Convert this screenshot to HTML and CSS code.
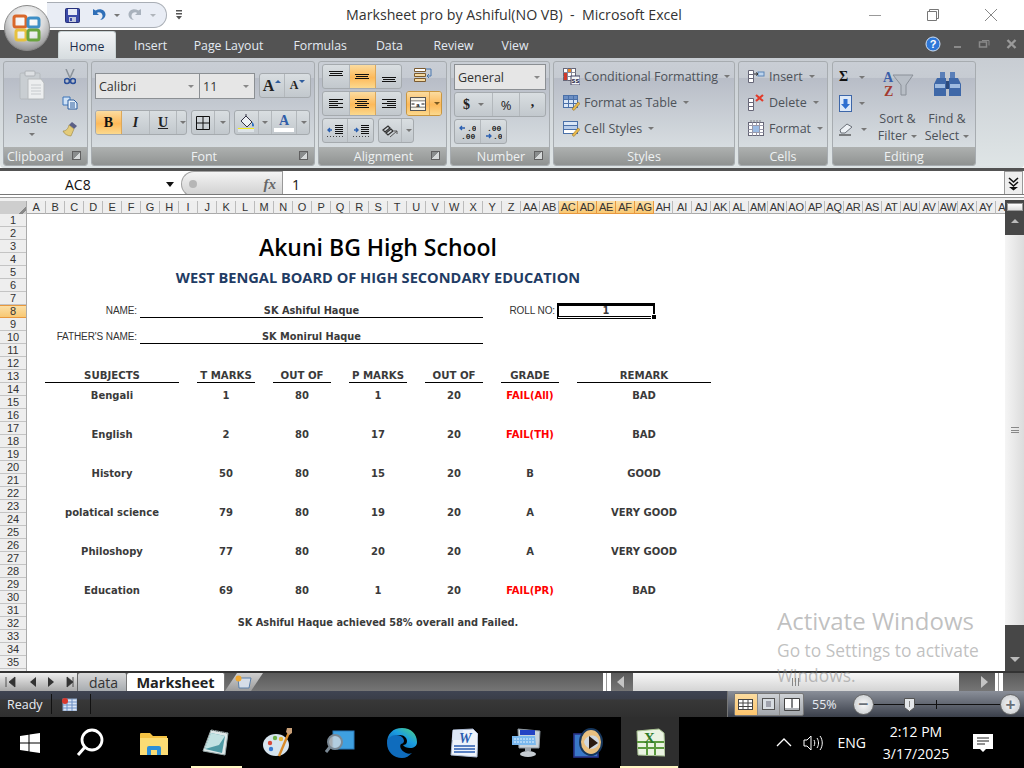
FILE: index.html
```html
<!DOCTYPE html>
<html lang="en">
<head>
    <meta charset="UTF-8">
    <title>Marksheet pro by Ashiful(NO VB) - Microsoft Excel</title>
    <link rel="stylesheet" href="styles.css">
</head>
<body>
    <!-- office orb sits over the title bar and tabs -->
    <div class="orb">
        <svg width="46" height="46" viewBox="0 0 46 46">
            <defs>
                <radialGradient id="orbFill" cx="50%" cy="30%" r="70%"><stop offset="0" stop-color="#ffffff"/><stop offset="0.55" stop-color="#d9dadb"/><stop offset="1" stop-color="#8f8f8f"/></radialGradient>
            </defs>
            <circle cx="23" cy="23" r="22.5" fill="url(#orbFill)" stroke="#8a8a8a"/>
            <rect x="10" y="11" width="12" height="11" rx="2" fill="#fff" fill-opacity=".5" stroke="#d9682b" stroke-width="3"/>
            <rect x="24" y="13" width="11" height="9" rx="2" fill="#fff" fill-opacity=".5" stroke="#3f8fc6" stroke-width="3"/>
            <rect x="12" y="25" width="10" height="10" rx="2" fill="#fff" fill-opacity=".6" stroke="#e7c13e" stroke-width="3"/>
            <rect x="24" y="25" width="11" height="10" rx="2" fill="#fff" fill-opacity=".5" stroke="#6aa43e" stroke-width="3"/>
        </svg>
    </div>

    <div class="titlebar">
        <div class="qat">
            <svg class="qat-save" width="15" height="15" viewBox="0 0 15 15"><rect x=".5" y=".5" width="14" height="14" rx="1" fill="#3b4aa8" stroke="#27307a"/><rect x="3" y="1" width="9" height="6" fill="#e6eaf6"/><rect x="4" y="9" width="7" height="5" fill="#c3c9de"/><rect x="5" y="10" width="2" height="3" fill="#3b4aa8"/></svg>
            <svg class="qat-undo" width="14" height="14" viewBox="0 0 14 14"><path d="M1 1v6h6L4.800 4.900C7 3.600 10 4.600 10.500 7.500c.3 2-1 3.600-2.500 4.500 3-.3 5.500-2.500 5.500-5.500C13.500 2 8-.5 3.600 2.600z" fill="#2f6fb8"/></svg>
            <span class="caret qat-caret"></span>
            <svg class="qat-redo" width="14" height="14" viewBox="0 0 14 14"><path d="M13 1v6H7l2.200-2.100C7 3.600 4 4.600 3.500 7.500c-.3 2 1 3.600 2.500 4.500-3-.3-5.500-2.500-5.500-5.500C.5 2 6-.5 10.400 2.600z" fill="#a9b2bd"/></svg>
            <span class="caret qat-caret light"></span>
        </div>
        <svg class="qat-custom" width="8" height="10" viewBox="0 0 8 10"><rect x="1" y="0" width="6" height="1.500" fill="#555"/><rect x="1" y="3" width="6" height="1.500" fill="#555"/><path d="M1 6h6L4 9.500z" fill="#555"/></svg>
        <div class="win-title">Marksheet pro by Ashiful(NO VB) &nbsp;-&nbsp; Microsoft Excel</div>
        <div class="win-buttons">
            <svg width="14" height="14" viewBox="0 0 14 14"><path d="M1 7.500h12" stroke="#999" fill="none"/></svg>
            <svg width="14" height="14" viewBox="0 0 14 14"><path d="M1.500 3.500h9v9h-9zM3.500 3.500v-2h9v9h-2" stroke="#777" fill="none"/></svg>
            <svg width="14" height="14" viewBox="0 0 14 14"><path d="M1 1l12 12M13 1L1 13" stroke="#888" fill="none"/></svg>
        </div>
    </div>

    <div class="tabbar">
        <span class="tab active">Home</span>
        <span class="tab t-insert">Insert</span>
        <span class="tab t-page">Page Layout</span>
        <span class="tab t-formulas">Formulas</span>
        <span class="tab t-data">Data</span>
        <span class="tab t-review">Review</span>
        <span class="tab t-view">View</span>
        <div class="tab-right">
            <svg width="16" height="16" viewBox="0 0 16 16"><circle cx="8" cy="8" r="7" fill="#2f78d8" stroke="#cfe0f5"/><text x="8" y="12" text-anchor="middle" font-size="11" font-weight="700" font-family="Liberation Sans" fill="#fff">?</text></svg>
            <svg class="tr-min" width="10" height="10" viewBox="0 0 10 10"><rect x="1" y="7" width="7" height="2" fill="#8a8a8a"/></svg>
            <svg class="tr-rest" width="12" height="10" viewBox="0 0 12 10"><rect x="1.500" y="3" width="7" height="5" fill="none" stroke="#8a8a8a" stroke-width="1.500"/><path d="M4 1.500h7v5" fill="none" stroke="#8a8a8a"/></svg>
            <svg class="tr-close" width="11" height="10" viewBox="0 0 11 10"><path d="M1.500 1l8 8M9.500 1l-8 8" stroke="#9a9a9a" stroke-width="2.400" fill="none"/></svg>
        </div>
    </div>

    <div class="ribbon">
        <section class="group g-clip">
            <div class="group-body clip-body">
                <div class="paste">
                    <svg width="26" height="30" viewBox="0 0 26 30"><rect x="1" y="3" width="20" height="26" rx="1.500" fill="#c9ced2" stroke="#b4b9bd"/><rect x="6" y="1" width="10" height="5" rx="1" fill="#dde0e3" stroke="#aeb2b6"/><path d="M9 9h13l3 4v16H9z" fill="#eceeef" stroke="#b6babd"/><path d="M12 15h10M12 18h10M12 21h10M12 24h10" stroke="#c6cacd"/></svg>
                    <span class="paste-label">Paste</span>
                    <span class="caret"></span>
                </div>
                <div class="clip-tools">
                    <svg width="12" height="16" viewBox="0 0 12 16"><path d="M2 0l4 9M10 0L6 9" stroke="#8b929a" stroke-width="1.500" fill="none"/><circle cx="3" cy="12" r="2.500" fill="none" stroke="#2a4f9a" stroke-width="1.600"/><circle cx="9" cy="12" r="2.500" fill="none" stroke="#2a4f9a" stroke-width="1.600"/></svg>
                    <svg width="16" height="14" viewBox="0 0 16 14"><path d="M1 1h7v8H1z" fill="#cfe2f6" stroke="#3a73b8"/><path d="M6 4h6l3 3v6H6z" fill="#e6f0fa" stroke="#2b5d9e"/><path d="M8 7h5M8 9h5M8 11h5" stroke="#2b5d9e"/></svg>
                    <svg width="16" height="16" viewBox="0 0 16 16"><path d="M10 1l5 4-3 3-5-4z" fill="#5a5f86"/><path d="M7 4l5 4-3 7C6 15 2 13 1 10c3 0 5-2 6-6z" fill="#e3cb7a" stroke="#9a8442" stroke-width=".6"/></svg>
                </div>
            </div>
            <div class="group-label left">Clipboard<span class="launcher"></span></div>
        </section>

        <section class="group g-font">
            <div class="group-body font-body">
                <div class="row">
                    <div class="combo c-fontname"><span>Calibri</span><span class="caret"></span></div>
                    <div class="combo c-fontsize"><span>11</span><span class="caret"></span></div>
                    <div class="btn-set grow">
                        <span class="btn"><b class="big-a">A</b><i class="mini-up"></i></span>
                        <span class="btn"><b class="small-a">A</b><i class="mini-down"></i></span>
                    </div>
                </div>
                <div class="row row-b">
                    <div class="btn-set set-biu">
                        <span class="btn on fmt fmt-b">B</span>
                        <span class="btn fmt fmt-i">I</span>
                        <span class="btn fmt fmt-u">U</span>
                        <span class="btn btn-drop"><span class="caret"></span></span>
                    </div>
                    <div class="btn-set set-border">
                        <span class="btn btn-border"><svg width="14" height="14" viewBox="0 0 14 14"><path d="M.5.500h13v13H.5zM7 .5v13M.5 7h13" fill="none" stroke="#111"/></svg></span>
                        <span class="btn btn-drop"><span class="caret"></span></span>
                    </div>
                    <div class="btn-set set-color">
                        <span class="btn btn-fill"><svg width="18" height="18" viewBox="0 0 18 18"><path d="M3 7l5-5 6 6-5 5z" fill="#eef1f5" stroke="#334"/><path d="M8 2V0" stroke="#334"/><path d="M14 8c1.500 1 2 2.500 2 3.500a1 1 0 01-2 0z" fill="#2a6fc0"/><rect x="0" y="14" width="16" height="1" fill="#f3ec1c"/><rect x="0" y="15" width="16" height="3" fill="#dde3e8"/></svg></span>
                        <span class="btn btn-drop"><span class="caret"></span></span>
                        <span class="btn btn-color"><b class="color-a">A</b><i class="color-bar"></i></span>
                        <span class="btn btn-drop"><span class="caret"></span></span>
                    </div>
                </div>
            </div>
            <div class="group-label">Font<span class="launcher"></span></div>
        </section>

        <section class="group g-align">
            <div class="group-body align-body">
                <div class="row">
                    <div class="btn-set set-three">
                        <span class="btn"><svg width="14" height="12" viewBox="0 0 14 12"><path d="M0 .5h14M1 2.500h12M0 4.500h14" stroke="#111"/></svg></span>
                        <span class="btn on"><svg width="14" height="12" viewBox="0 0 14 12"><path d="M0 3.500h14M1 5.500h12M0 7.500h14" stroke="#111"/></svg></span>
                        <span class="btn"><svg width="14" height="12" viewBox="0 0 14 12"><path d="M0 6.500h14M1 8.500h12M0 10.500h14" stroke="#111"/></svg></span>
                    </div>
                    <svg class="wrap-icon" width="18" height="16" viewBox="0 0 18 16"><path d="M.5 1.500h11v3H.5z" fill="#fff" stroke="#7a5a30"/><path d="M.5 6.500h11v3H.5zM.5 11.500h11v3H.5z" fill="#f5d9a0" stroke="#7a5a30"/><path d="M12 2h5M17 2v7h-4M13 9l2-2M13 9l2 2" stroke="#4a78b0" fill="none"/></svg>
                </div>
                <div class="row">
                    <div class="btn-set set-three">
                        <span class="btn"><svg width="14" height="12" viewBox="0 0 14 12"><path d="M0 1.500h14M0 3.500h9M0 5.500h14M0 7.500h9M0 9.500h14" stroke="#111"/></svg></span>
                        <span class="btn on"><svg width="14" height="12" viewBox="0 0 14 12"><path d="M0 1.500h14M2 3.500h10M0 5.500h14M2 7.500h10M0 9.500h14" stroke="#111"/></svg></span>
                        <span class="btn"><svg width="14" height="12" viewBox="0 0 14 12"><path d="M0 1.500h14M5 3.500h9M0 5.500h14M5 7.500h9M0 9.500h14" stroke="#111"/></svg></span>
                    </div>
                    <div class="btn-set set-merge">
                        <span class="btn on btn-merge"><svg width="16" height="14" viewBox="0 0 16 14"><rect x=".5" y=".5" width="15" height="13" fill="#f7f2e4" stroke="#555"/><path d="M.5 4h15M.5 10h15" stroke="#555"/><rect x="1" y="4.500" width="14" height="5" fill="#fff"/><text x="8" y="9.500" text-anchor="middle" font-size="6" font-weight="700" font-family="Liberation Sans" fill="#111">a</text><path d="M1.500 7h3M11.500 7h3" stroke="#111"/></svg></span>
                        <span class="btn on btn-drop"><span class="caret dark"></span></span>
                    </div>
                </div>
                <div class="row">
                    <div class="btn-set set-indent">
                        <span class="btn"><svg width="16" height="13" viewBox="0 0 16 13"><path d="M8 1.500h8M8 3.500h8M8 5.500h8M8 7.500h8M8 9.500h8" stroke="#111"/><path d="M5 6H1m2-2L1 6l2 2" stroke="#2a5fb0" fill="none" stroke-width="1.400"/><path d="M0 12.500h16" stroke="#444" stroke-dasharray="1 2"/></svg></span>
                        <span class="btn"><svg width="16" height="13" viewBox="0 0 16 13"><path d="M8 1.500h8M8 3.500h8M8 5.500h8M8 7.500h8M8 9.500h8" stroke="#111"/><path d="M1 6h4M3 4l2 2-2 2" stroke="#2a5fb0" fill="none" stroke-width="1.400"/><path d="M0 12.500h16" stroke="#444" stroke-dasharray="1 2"/></svg></span>
                    </div>
                    <div class="btn-set set-orient">
                        <span class="btn btn-orient"><svg width="16" height="14" viewBox="0 0 16 14"><path d="M1 6l5-4 2 2-5 4zM4 9l5-4 2 2-5 4z" fill="none" stroke="#333" stroke-width="1.300"/><path d="M8 13l7-6M12 7h3v3" stroke="#555" fill="none"/></svg></span>
                        <span class="btn btn-drop"><span class="caret"></span></span>
                    </div>
                </div>
            </div>
            <div class="group-label">Alignment<span class="launcher"></span></div>
        </section>

        <section class="group g-number">
            <div class="group-body number-body">
                <div class="combo c-general"><span>General</span><span class="caret"></span></div>
                <div class="btn-set set-num">
                    <span class="btn btn-dollar"><b>$</b><span class="caret"></span></span>
                    <span class="btn btn-pct">%</span>
                    <span class="btn btn-comma"><b>,</b></span>
                </div>
                <div class="btn-set set-dec">
                    <span class="btn btn-dec"><svg width="17" height="16" viewBox="0 0 17 16"><path d="M1 4h5M3 2L1 4l2 2" stroke="#2a5fb0" fill="none" stroke-width="1.300"/><text x="8" y="7" font-size="8" font-weight="700" font-family="Liberation Mono" fill="#222">.0</text><text x="2" y="15" font-size="8" font-weight="700" font-family="Liberation Mono" fill="#222">.00</text></svg></span>
                    <span class="btn btn-dec"><svg width="17" height="16" viewBox="0 0 17 16"><text x="2" y="7" font-size="8" font-weight="700" font-family="Liberation Mono" fill="#222">.00</text><path d="M1 12h5M4 10l2 2-2 2" stroke="#2a5fb0" fill="none" stroke-width="1.300"/><text x="8" y="15" font-size="8" font-weight="700" font-family="Liberation Mono" fill="#222">.0</text></svg></span>
                </div>
            </div>
            <div class="group-label">Number<span class="launcher"></span></div>
        </section>

        <section class="group g-styles">
            <div class="group-body list-body">
                <div class="list-item"><svg width="17" height="17" viewBox="0 0 17 17"><rect x=".5" y=".5" width="12" height="12" fill="#fff" stroke="#667"/><path d="M.5 4.500h12M.5 8.500h12M4.500.5v12M8.500.5v12" stroke="#889"/><rect x="1" y="5" width="3" height="7" fill="#d23a2a"/><rect x="5" y="1" width="3" height="3" fill="#e8842a"/><rect x="8" y="8" width="9" height="9" fill="#f4f6f8" stroke="#446"/><text x="12.500" y="15" text-anchor="middle" font-size="7" font-weight="700" font-family="Liberation Sans" fill="#224">ss</text></svg><span>Conditional Formatting</span><span class="caret"></span></div>
                <div class="list-item"><svg width="17" height="17" viewBox="0 0 17 17"><rect x=".5" y="1.500" width="14" height="12" fill="#dbe7f6" stroke="#4a70a8"/><rect x="1" y="2" width="13" height="3" fill="#6c8fc4"/><path d="M.5 5.500h14M.5 9.500h14M5.500 1.500v12M10.500 1.500v12" stroke="#4a70a8"/><path d="M9 15l6-7 2 1.500-6 7z" fill="#e8b84a" stroke="#8a6a20" stroke-width=".5"/></svg><span>Format as Table</span><span class="caret"></span></div>
                <div class="list-item"><svg width="17" height="17" viewBox="0 0 17 17"><rect x=".5" y="1.500" width="14" height="4" fill="#dbe7f6" stroke="#4a70a8"/><rect x=".5" y="5.500" width="14" height="4" fill="#b8cdea" stroke="#4a70a8"/><rect x=".5" y="9.500" width="14" height="4" fill="#fff" stroke="#4a70a8"/><path d="M9 15l6-7 2 1.500-6 7z" fill="#e8b84a" stroke="#8a6a20" stroke-width=".5"/></svg><span>Cell Styles</span><span class="caret"></span></div>
            </div>
            <div class="group-label center">Styles</div>
        </section>

        <section class="group g-cells">
            <div class="group-body list-body">
                <div class="list-item"><svg width="17" height="17" viewBox="0 0 17 17"><path d="M.5 2.500h5v4h-5zM.5 6.500h5v4h-5zM.5 10.500h5v4h-5z" fill="#fff" stroke="#667"/><rect x="10" y="4" width="6" height="4" fill="#bcd4ee" stroke="#5c86b8"/><path d="M6 6h4M8 4.500L10 6 8 7.500" stroke="#333" fill="none"/></svg><span>Insert</span><span class="caret"></span></div>
                <div class="list-item"><svg width="17" height="17" viewBox="0 0 17 17"><path d="M.5 4.500h5v4h-5zM.5 8.500h5v4h-5zM.5 12.500h5v4h-5z" fill="#fff" stroke="#667"/><path d="M8 1l7 6M15 1L8 7" stroke="#e23b2a" stroke-width="2.200"/></svg><span>Delete</span><span class="caret"></span></div>
                <div class="list-item"><svg width="17" height="17" viewBox="0 0 17 17"><rect x=".5" y="2.500" width="15" height="13" fill="#fff" stroke="#667"/><path d="M.5 5.500h15M.5 9.500h15M.5 12.500h15M4.500 2.500v13M8.500 2.500v13M11.500 2.500v13" stroke="#99a"/><rect x="5" y="6" width="6" height="6" fill="#9cbce4"/><path d="M3 .5v2M6 .5v2M9 .5v2M12 .5v2" stroke="#444" stroke-dasharray="1 1"/></svg><span>Format</span><span class="caret"></span></div>
            </div>
            <div class="group-label center">Cells</div>
        </section>

        <section class="group g-edit">
            <div class="group-body edit-body">
                <div class="edit-small">
                    <div class="edit-tool"><b class="sigma">Σ</b><span class="caret"></span></div>
                    <div class="edit-tool"><svg width="13" height="17" viewBox="0 0 13 17"><rect x=".5" y=".5" width="12" height="16" fill="#dce8f8" stroke="#3d66a8"/><path d="M4.500 4h4v5H11l-4.500 5L2 9h2.500z" fill="#2e6fd0"/></svg><span class="caret"></span></div>
                    <div class="edit-tool"><svg width="15" height="14" viewBox="0 0 15 14"><path d="M1 8l7-6 5 3-7 6H2z" fill="#eef2f6" stroke="#6a7078"/><path d="M0 13h12" stroke="#222"/></svg><span class="caret"></span></div>
                </div>
                <div class="edit-big e-sort">
                    <svg width="32" height="32" viewBox="0 0 32 32"><text x="1" y="14" font-size="14" font-weight="700" font-family="Liberation Serif" fill="#3b5fa8">A</text><text x="2" y="28" font-size="14" font-weight="700" font-family="Liberation Serif" fill="#a33a30">Z</text><path d="M11 7h20l-7 10v10h-5V17z" fill="#b8bec6" stroke="#8a9098"/></svg>
                    <span>Sort &amp;</span>
                    <span>Filter<i class="caret"></i></span>
                </div>
                <div class="edit-big e-find">
                    <svg width="30" height="28" viewBox="0 0 30 28"><path d="M8 2h5v6H8zM18 2h5v6h-5z" fill="#5a7fb8"/><path d="M5 8h9v18H2V14zM17 8h9l3 6v12H17z" fill="#3f68a8"/><path d="M3 14h10v4H3zM18 14h10v4H18z" fill="#9fbbe0"/><rect x="14" y="11" width="3" height="8" fill="#2c4a7c"/></svg>
                    <span>Find &amp;</span>
                    <span>Select<i class="caret"></i></span>
                </div>
            </div>
            <div class="group-label center">Editing</div>
        </section>
    </div>

    <div class="formula-bar">
        <div class="name-box"><span>AC8</span><i class="name-caret"></i></div>
        <div class="fx-pill"><i class="fx-dot"></i><span>fx</span></div>
        <div class="formula-input">1</div>
        <div class="formula-expand"><svg width="11" height="14" viewBox="0 0 11 14"><path d="M1 1l4.500 4L10 1M1 5l4.500 4L10 5" fill="none" stroke="#111" stroke-width="1.600"/><path d="M1 10h9l-4.500 3.500z" fill="#111"/></svg></div>
    </div>
    <div class="bar-gap"></div>

    <div class="col-heads">
        <div class="corner"></div>
        <span>A</span><span>B</span><span>C</span><span>D</span><span>E</span><span>F</span><span>G</span><span>H</span><span>I</span><span>J</span><span>K</span><span>L</span><span>M</span><span>N</span><span>O</span><span>P</span><span>Q</span><span>R</span><span>S</span><span>T</span><span>U</span><span>V</span><span>W</span><span>X</span><span>Y</span><span>Z</span>
        <span>AA</span><span>AB</span><span class="sel">AC</span><span class="sel">AD</span><span class="sel">AE</span><span class="sel">AF</span><span class="sel">AG</span><span>AH</span><span>AI</span><span>AJ</span><span>AK</span><span>AL</span><span>AM</span><span>AN</span><span>AO</span><span>AP</span><span>AQ</span><span>AR</span><span>AS</span><span>AT</span><span>AU</span><span>AV</span><span>AW</span><span>AX</span><span>AY</span><span>AZ</span>
    </div>

    <div class="work">
        <div class="row-heads">
            <span>1</span><span>2</span><span>3</span><span>4</span><span>5</span><span>6</span><span>7</span><span class="sel">8</span><span>9</span><span>10</span>
            <span>11</span><span>12</span><span>13</span><span>14</span><span>15</span><span>16</span><span>17</span><span>18</span><span>19</span><span>20</span>
            <span>21</span><span>22</span><span>23</span><span>24</span><span>25</span><span>26</span><span>27</span><span>28</span><span>29</span><span>30</span>
            <span>31</span><span>32</span><span>33</span><span>34</span><span>35</span>
        </div>
        <div class="sheet">
            <div class="school">Akuni BG High School</div>
            <div class="board">WEST BENGAL BOARD OF HIGH SECONDARY EDUCATION</div>
            <div class="info-row">
                <span class="info-label">NAME:</span>
                <span class="info-value">SK Ashiful Haque</span>
                <span class="roll-label">ROLL NO:</span>
                <span class="roll-cell">1<i class="handle"></i></span>
            </div>
            <div class="info-row">
                <span class="info-label">FATHER'S NAME:</span>
                <span class="info-value">SK Monirul Haque</span>
            </div>
            <div class="marks-head marks-grid">
                <span>SUBJECTS</span><span>T MARKS</span><span>OUT OF</span><span>P MARKS</span><span>OUT OF</span><span>GRADE</span><span>REMARK</span>
            </div>
            <div class="marks-row marks-grid"><span>Bengali</span><span>1</span><span>80</span><span>1</span><span>20</span><span class="fail">FAIL(All)</span><span>BAD</span></div>
            <div class="marks-row marks-grid"><span>English</span><span>2</span><span>80</span><span>17</span><span>20</span><span class="fail">FAIL(TH)</span><span>BAD</span></div>
            <div class="marks-row marks-grid"><span>History</span><span>50</span><span>80</span><span>15</span><span>20</span><span>B</span><span>GOOD</span></div>
            <div class="marks-row marks-grid"><span>polatical science</span><span>79</span><span>80</span><span>19</span><span>20</span><span>A</span><span>VERY GOOD</span></div>
            <div class="marks-row marks-grid"><span>Philoshopy</span><span>77</span><span>80</span><span>20</span><span>20</span><span>A</span><span>VERY GOOD</span></div>
            <div class="marks-row marks-grid"><span>Education</span><span>69</span><span>80</span><span>1</span><span>20</span><span class="fail">FAIL(PR)</span><span>BAD</span></div>
            <div class="summary">SK Ashiful Haque achieved 58% overall and Failed.</div>
        </div>
        <div class="vscroll">
            <i class="split-v"></i>
            <i class="arrow-up"></i>
            <div class="vthumb"><i class="grip-h"></i></div>
            <i class="arrow-down"></i>
        </div>
    </div>

    <div class="sheet-tabs">
        <div class="tab-nav">
            <svg width="70" height="12" viewBox="0 0 70 12"><path d="M2 1v10M11 1L5 6l6 5z" fill="#333" stroke="#333" stroke-width=".8"/><path d="M32 1l-6 5 6 5z" fill="#333"/><path d="M44 1l6 5-6 5z" fill="#333"/><path d="M63 1l6 5-6 5zM69 1v10" fill="#333" stroke="#333" stroke-width=".8"/></svg>
        </div>
        <span class="sheet-tab">data</span>
        <span class="sheet-tab current">Marksheet</span>
        <span class="new-tab"><svg width="18" height="14" viewBox="0 0 18 14"><path d="M3 3h13l-2 10H4z" fill="#d5dde8" stroke="#5a7fa8"/><circle cx="3.500" cy="3.500" r="3" fill="#f0a830"/></svg></span>
        <div class="hscroll">
            <i class="split-h"></i>
            <i class="arrow-left"></i>
            <div class="hthumb"><i class="grip-v"></i></div>
            <i class="arrow-right"></i>
            <i class="split-h"></i>
        </div>
    </div>

    <div class="statusbar">
        <span class="ready">Ready</span>
        <i class="status-sep"></i>
        <svg class="macro" width="15" height="13" viewBox="0 0 15 13"><rect x="1" y="1" width="14" height="12" fill="#dbe6f6" stroke="#8aa4c8"/><path d="M1 4h14M1 7h14M1 10h14M5 1v12M10 1v12" stroke="#6c8fc4"/><circle cx="3" cy="3" r="3" fill="#d8362a"/></svg>
        <i class="status-sep"></i>
        <div class="status-right">
            <div class="views">
                <span class="view on"><svg width="15" height="11" viewBox="0 0 15 11"><rect x=".5" y=".5" width="14" height="10" fill="#fff" stroke="#444"/><path d="M.5 4h14M.5 7.500h14M5 .5v10M10 .5v10" stroke="#444"/></svg></span>
                <span class="view"><svg width="13" height="12" viewBox="0 0 13 12"><rect x=".5" y=".5" width="12" height="11" fill="#d8dde2" stroke="#555"/><path d="M4 4h5M4 6h5M4 8h5" stroke="#667"/></svg></span>
                <span class="view"><svg width="16" height="13" viewBox="0 0 16 13"><path d="M1 1h6v9H1zM9 1h6v9H9z" fill="#fff"/><path d="M.5 .5h15v12H.5zM8 .5v9" fill="none" stroke="#444"/></svg></span>
            </div>
            <span class="zoom-pct">55%</span>
            <span class="zoom-btn">&minus;</span>
            <div class="zoom-track"><i class="zoom-tick"></i><svg class="zoom-thumb" width="11" height="14" viewBox="0 0 11 14"><path d="M.5.500h10v9l-5 4-5-4z" fill="#e4e7ea" stroke="#555"/><path d="M5.500 3v6" stroke="#888"/></svg></div>
            <span class="zoom-btn">+</span>
        </div>
    </div>

    <div class="taskbar">
        <span class="task task-start"><svg width="20" height="20" viewBox="0 0 20 20"><path d="M0 3l8.500-1.200v7.700H0zM9.500 1.600L20 0v9.500H9.500zM0 10.500h8.500v7.700L0 17zM9.500 10.500H20V20L9.500 18.400z" fill="#fff"/></svg></span>
        <span class="task task-start"><svg width="28" height="30" viewBox="0 0 28 30"><circle cx="16" cy="12" r="10" fill="none" stroke="#fff" stroke-width="2.800"/><path d="M9 19l-7 8" stroke="#fff" stroke-width="3"/></svg></span>
        <span class="task"><svg width="28" height="24" viewBox="0 0 28 24"><path d="M0 3a1 1 0 011-1h9l3 3h14v19H0z" fill="#f4c243"/><path d="M0 7h28v17H0z" fill="#fbdc74"/><path d="M7 24v-7a2 2 0 012-2h10a2 2 0 012 2v7h-4v-5h-6v5z" fill="#2c8fd8"/></svg></span>
        <span class="task task-note"><svg width="28" height="28" viewBox="0 0 28 28"><path d="M9 1l17 3-3 22L1 22z" fill="#dfe8e8" stroke="#9aa"/><path d="M9 4l14 3-3 17L3 20z" fill="#4f9aa4"/><path d="M9 4l14 3-6 9L3 20z" fill="#c2e2e2"/><path d="M10 1l15 3" stroke="#555" stroke-dasharray="1 1"/></svg></span>
        <span class="task"><svg width="30" height="30" viewBox="0 0 30 30"><ellipse cx="13" cy="17" rx="13" ry="11" fill="#d6e4ee"/><circle cx="7" cy="15" r="2.200" fill="#d8483a"/><circle cx="12" cy="10" r="2.200" fill="#6cb04a"/><circle cx="18" cy="11" r="2.200" fill="#e8b83a"/><circle cx="8" cy="21" r="2.200" fill="#3a7ad0"/><path d="M27 2l-11 26" stroke="#d88a2a" stroke-width="2.400"/><path d="M24 0h5v5l-3 2-3-3z" fill="#caa078"/></svg></span>
        <span class="task"><svg width="30" height="28" viewBox="0 0 30 28"><rect x="8" y="2" width="21" height="18" fill="#3fa0e0" stroke="#2a78b8"/><circle cx="10" cy="13" r="7" fill="#cfd8e0" fill-opacity=".8" stroke="#7a8894" stroke-width="2"/><path d="M5 18l-4 5" stroke="#7a8894" stroke-width="3"/></svg></span>
        <span class="task"><svg width="30" height="30" viewBox="0 0 30 30"><defs><linearGradient id="edgeFill" x1="0" y1="1" x2="1" y2="0"><stop offset="0" stop-color="#0c59a4"/><stop offset="0.55" stop-color="#1b9de2"/><stop offset="1" stop-color="#4fd67a"/></linearGradient></defs><path d="M15 0c9 0 15 6 15 14 0 4-3 6-7 6-3 0-6-1-7-3 2 0 4-1 4-4 0-3-3-6-7-6C7 7 2 11 0 15 0 6 6 0 15 0z" fill="url(#edgeFill)"/><path d="M0 15c0-5 5-8 9-8 5 0 8 3 8 6 0 2-2 3-3 3-2 2 0 7 5 9 2 1 4 1 6 0-3 3-6 5-10 5C7 30 0 24 0 15z" fill="#0f6cbd"/></svg></span>
        <span class="task"><svg width="28" height="30" viewBox="0 0 28 30"><path d="M3 2l20-1 5 5-1 23-26-2z" fill="#eef3fb" stroke="#aab8d0"/><path d="M3 2l10 0-1 10H2z" fill="#dbe6f6"/><text x="9" y="15" font-size="14" font-weight="700" font-style="italic" font-family="Liberation Serif" fill="#2a5cb0">W</text><path d="M4 18h21M4 21h21M4 24h21" stroke="#2a5cb0" stroke-width="1.600"/></svg></span>
        <span class="task"><svg width="30" height="30" viewBox="0 0 30 30"><path d="M7 1l22 2-1 17H8z" fill="#c9d2da" stroke="#8a949e"/><rect x="9" y="2" width="15" height="5" fill="#2342c4"/><path d="M1 8h23l1 9H1z" fill="#7ab8ee"/><path d="M3 11h20M3 14h20" stroke="#e4f2ff" stroke-dasharray="2 1"/><path d="M14 20h6v3h-6z" fill="#9aa2aa"/><ellipse cx="17" cy="26" rx="8" ry="3" fill="#c6ccd2"/></svg></span>
        <span class="task"><svg width="30" height="30" viewBox="0 0 30 30"><rect x="1" y="6" width="24" height="23" fill="#3a78c8" stroke="#28348a" stroke-width="1.600"/><ellipse cx="18" cy="14" rx="11" ry="13" fill="#e8c080" stroke="#16365c" stroke-width="2"/><path d="M11 14c2-8 14-9 15 0-1 9-13 9-15 0z" fill="#cfd8e0"/><path d="M16 8l9 7-9 6z" fill="#2a1a10"/></svg></span>
        <span class="task task-excel"><svg width="30" height="30" viewBox="0 0 30 30"><path d="M2 3l22-2 5 4 1 23-27-1z" fill="#eaf3e2" stroke="#a6c090"/><path d="M2 14h27M3 20h26M12 14v13M20 14v13" stroke="#5b9a3e" stroke-width="2"/><text x="9" y="15" font-size="15" font-weight="700" font-family="Liberation Serif" fill="#2f7a28">X</text></svg></span>
        <div class="tray">
            <svg width="16" height="9" viewBox="0 0 16 9"><path d="M1 8l7-7 7 7" fill="none" stroke="#fff" stroke-width="1.300"/></svg>
            <svg class="tray-sound" width="22" height="16" viewBox="0 0 22 16"><path d="M1 5h3l4-4v14l-4-4H1z" fill="none" stroke="#fff"/><path d="M11 5c1 2 1 4 0 6M14 3c2 3 2 7 0 10M17 1c3 4 3 10 0 14" fill="none" stroke="#fff"/></svg>
            <span class="tray-lang">ENG</span>
            <div class="clock"><span>2:12 PM</span><span>3/17/2025</span></div>
            <svg class="tray-note" width="20" height="20" viewBox="0 0 20 20"><path d="M0 1h20v15h-7l-3 3-3-3H0z" fill="#fff"/><path d="M4 5h12M4 8h12M4 11h8" stroke="#222"/></svg>
        </div>
        <i class="task-mark mark-note"></i>
        <i class="task-mark mark-excel"></i>
    </div>

    <!-- watermark lies over the sheet and the scrollbar -->
    <div class="activate">
        <div class="activate-title">Activate Windows</div>
        <div class="activate-text">Go to Settings to activate<br>Windows.</div>
    </div>
</body>
</html>
```
FILE: styles.css
```css
* {
    box-sizing: border-box;
}
body {
    margin: 0;
    width: 1024px;
    height: 768px;
    overflow: hidden;
    position: relative;
    display: flex;
    flex-direction: column;
    background: #fff;
    font-family: "Open Sans", "Liberation Sans", sans-serif;
    font-size: 12px;
}
i {
    display: block;
}
.caret {
    display: inline-block;
    width: 0;
    height: 0;
    border: 3px solid transparent;
    border-top: 3px solid #777;
    border-bottom: 0;
}
.caret.light {
    border-top-color: #b0b5bb;
}
.caret.dark {
    border-top-color: #7a5a20;
}

/* title bar */
.orb {
    position: absolute;
    left: 4px;
    top: 5px;
    z-index: 5;
    width: 46px;
    height: 46px;
}
.titlebar {
    height: 30px;
    flex: none;
    display: flex;
    align-items: center;
    position: relative;
    background: #fff;
}
.qat {
    margin-left: 47px;
    width: 120px;
    height: 26px;
    padding-left: 18px;
    display: flex;
    align-items: center;
    background: #e9edf5;
    border: 1px solid #a9aeb5;
    border-left: 0;
    border-radius: 0 13px 13px 0;
}
.qat-undo {
    margin-left: 12px;
}
.qat-caret {
    margin-left: 8px;
}
.qat-redo {
    margin-left: 8px;
}
.qat-custom {
    margin-left: 8px;
}
.win-title {
    position: absolute;
    left: 346px;
    top: 5px;
    font-size: 14.2px;
    color: #333;
    white-space: nowrap;
}
.win-buttons {
    margin-left: auto;
    margin-right: 26px;
    display: flex;
    gap: 44px;
}

/* tabs */
.tabbar {
    height: 28px;
    flex: none;
    display: flex;
    align-items: center;
    background: #535353;
    position: relative;
}
.tab {
    margin-top: 3px;
    color: #e4eaf2;
    font-size: 12.3px;
    white-space: nowrap;
}
.tab.active {
    width: 58px;
    height: 28px;
    margin-left: 58px;
    margin-top: 1px;
    line-height: 29px;
    text-align: center;
    color: #1b2c4a;
    background: linear-gradient(#f3f5f7, #d6dcdf);
    border: 1px solid #c8d2d4;
    border-bottom: 0;
    border-radius: 3px 3px 0 0;
}
.t-insert { margin-left: 18px; }
.t-page { margin-left: 26.5px; }
.t-formulas { margin-left: 30px; }
.t-data { margin-left: 29px; }
.t-review { margin-left: 30.5px; }
.t-view { margin-left: 28px; }
.tab-right {
    margin-left: auto;
    margin-right: 7px;
    display: flex;
    align-items: center;
}
.tr-min { margin-left: 12px; }
.tr-rest { margin-left: 15px; }
.tr-close { margin-left: 16px; }

/* ribbon */
.ribbon {
    height: 110px;
    flex: none;
    padding: 3px 0 0 3px;
    display: flex;
    gap: 3px;
    background: linear-gradient(#c8cdd3, #dfe5e6);
    border-radius: 0 0 4px 4px;
}
.group {
    height: 105px;
    display: flex;
    flex-direction: column;
    border: 1px solid #a7acb0;
    border-radius: 3px;
    background: linear-gradient(#c9ced5 0, #c6cbd2 15%, #b8bdc7 16%, #dfe5e7 100%);
    overflow: hidden;
}
.g-clip { width: 85px; }
.g-font { width: 224px; }
.g-align { width: 129px; }
.g-number { width: 100px; }
.g-styles { width: 182px; }
.g-cells { width: 90px; }
.g-edit { width: 144px; margin-left: 1px; }
.group-body {
    height: 85px;
    flex: none;
    color: #4d5259;
}
.group-label {
    height: 19px;
    position: relative;
    padding-left: 2px;
    line-height: 19px;
    text-align: center;
    font-size: 12.5px;
    color: #eef1f2;
    background: linear-gradient(#aeb1b0, #8e9190);
}
.group-label.center {
    padding-left: 0;
}
.group-label.left {
    padding-left: 3px;
    text-align: left;
}
.launcher {
    position: absolute;
    right: 6px;
    top: 4px;
    width: 9px;
    height: 9px;
    border: 1px solid #606060;
    background: linear-gradient(135deg, #8a8d8d 50%, #d6d9d9 50%);
}

/* clipboard */
.clip-body {
    display: flex;
}
.paste {
    width: 55px;
    padding-top: 8px;
    display: flex;
    flex-direction: column;
    align-items: center;
}
.paste-label {
    margin-top: 10px;
    font-size: 12.5px;
}
.paste .caret {
    margin-top: 6px;
}
.clip-tools {
    width: 22px;
    padding-top: 7px;
    display: flex;
    flex-direction: column;
    align-items: center;
    gap: 11px;
}

/* buttons and combos */
.row {
    display: flex;
    gap: 4px;
}
.combo {
    height: 26px;
    display: flex;
    align-items: center;
    justify-content: space-between;
    padding: 0 5px 0 3px;
    background: #e6e6e6;
    border: 1px solid #8b8f93;
    color: #333;
    font-size: 12.5px;
}
.combo .caret {
    border-top-color: #888;
}
.c-fontname { width: 105px; }
.c-fontsize { width: 55px; margin-left: -4px; border-left: 0; }
.btn-set {
    display: flex;
    height: 25px;
    border: 1px solid #a5aaae;
    border-radius: 3px;
    background: linear-gradient(#d9dee1, #c2c8cd);
    overflow: hidden;
}
.btn {
    flex: none;
    height: 100%;
    display: flex;
    align-items: center;
    justify-content: center;
    position: relative;
    border-right: 1px solid #b3b8bc;
    color: #222;
}
.btn:last-child {
    border-right: 0;
}
.btn.on {
    background: linear-gradient(#fbdca0, #fdb95a 55%, #fbd98e);
    border-right-color: #dca85a;
}
.btn-drop {
    width: 16px;
}

/* font group */
.font-body {
    padding: 11px 0 0 3px;
}
.row-b {
    margin-top: 11px;
}
.grow {
    width: 52px;
    margin-left: 0;
}
.grow .btn {
    width: 50%;
}
.big-a {
    font: 700 16px "Liberation Serif", serif;
}
.small-a {
    font: 700 12px "Liberation Serif", serif;
}
.mini-up, .mini-down {
    width: 0;
    height: 0;
    margin: -9px 0 0 1px;
    border: 3px solid transparent;
}
.mini-up {
    border-top: 0;
    border-bottom: 3px solid #2f5d9e;
}
.mini-down {
    border-bottom: 0;
    border-top: 3px solid #2f5d9e;
}
.set-biu { width: 92px; }
.set-border { width: 39px; }
.set-color { width: 76px; }
.fmt {
    width: 26px;
    font: 700 14px "Liberation Serif", serif;
}
.fmt-b { color: #111; }
.fmt-i { font-style: italic; width: 28px; }
.fmt-u { text-decoration: underline; width: 27px; }
.set-biu .btn-drop { width: 11px; }
.set-border .btn-drop { width: 15px; }
.btn-border { width: 23px; }
.btn-fill { width: 24px; }
.set-color .btn-drop { width: 13px; }
.btn-color {
    width: 25px;
    flex-direction: column;
}
.color-a {
    font: 700 14px/14px "Liberation Serif", serif;
    color: #2f5da8;
}
.color-bar {
    width: 20px;
    height: 4px;
    background: #fff;
}

/* alignment group */
.align-body {
    padding: 2px 0 0 3px;
    display: flex;
    flex-direction: column;
    gap: 2px;
}
.set-three { width: 80px; }
.set-three .btn { width: 26.500px; }
.wrap-icon {
    margin: 3px 0 0 8px;
}
.set-merge {
    width: 36px;
    border-color: #c9963f;
}
.btn-merge { width: 23px; }
.set-merge .btn-drop { width: 13px; }
.set-indent { width: 52px; }
.set-indent .btn { width: 50%; }
.set-orient { width: 36px; }
.btn-orient { width: 23px; }
.set-orient .btn-drop { width: 13px; }

/* number group */
.number-body {
    padding: 2px 0 0 3px;
    display: flex;
    flex-direction: column;
    gap: 2px;
}
.c-general {
    width: 92px;
}
.set-num {
    width: 92px;
}
.btn-dollar {
    width: 38px;
    gap: 8px;
    font-size: 14px;
}
.btn-dollar b {
    font: 700 14px "Liberation Serif", serif;
}
.btn-pct {
    width: 27px;
    font-size: 13px;
}
.btn-comma {
    width: 25px;
    padding-bottom: 5px;
    font: 700 14px "Liberation Serif", serif;
}
.set-dec {
    width: 53px;
}
.btn-dec {
    width: 50%;
}

/* style and cell lists */
.list-body {
    padding: 1px 0 0 9px;
    display: flex;
    flex-direction: column;
}
.list-item {
    height: 26px;
    display: flex;
    align-items: center;
    font-size: 12.5px;
    white-space: nowrap;
}
.list-item span:first-of-type {
    margin-left: 4px;
}
.list-item .caret {
    margin-left: 6px;
}

/* editing */
.edit-body {
    display: flex;
    padding-left: 6px;
}
.edit-small {
    width: 34px;
    padding-top: 2px;
    display: flex;
    flex-direction: column;
}
.edit-tool {
    height: 26px;
    display: flex;
    align-items: center;
    gap: 7px;
}
.sigma {
    width: 13px;
    font: 700 14px "Liberation Serif", serif;
    color: #111;
}
.edit-big {
    display: flex;
    flex-direction: column;
    align-items: center;
    padding-top: 6px;
    font-size: 12.5px;
    line-height: 17px;
    white-space: nowrap;
}
.e-sort { width: 49px; }
.e-find { width: 50px; }
.edit-big svg {
    margin-bottom: 10px;
    height: 32px;
}
.edit-big .caret {
    margin: 0 0 2px 4px;
}

/* formula bar */
.formula-bar {
    height: 29px;
    flex: none;
    padding: 3px 1px 0 0;
    display: flex;
    background: linear-gradient(#535353 3px, #fff 3px);
}
.name-box {
    width: 180px;
    padding-left: 65px;
    display: flex;
    align-items: center;
    justify-content: space-between;
    padding-right: 6px;
    font-size: 14px;
    color: #111;
}
.name-caret {
    width: 0;
    height: 0;
    border: 4.500px solid transparent;
    border-top: 5px solid #111;
    border-bottom: 0;
}
.fx-pill {
    width: 101px;
    margin-left: 1px;
    display: flex;
    align-items: center;
    justify-content: space-between;
    padding: 0 6px 0 7px;
    background: linear-gradient(#f4f4f4, #cfcfcf);
    border: 1px solid #a0a0a0;
    border-right: 0;
    border-radius: 13px 0 0 13px;
}
.fx-dot {
    width: 8px;
    height: 8px;
    border-radius: 50%;
    background: #b6b6b6;
}
.fx-pill span {
    font: italic 700 15px "Liberation Serif", serif;
    color: #666;
}
.formula-input {
    flex: 1;
    padding-left: 9px;
    line-height: 27px;
    font-size: 14px;
    color: #111;
    border-left: 1px solid #999;
}
.formula-expand {
    width: 19px;
    display: flex;
    align-items: center;
    justify-content: center;
    background: #eee;
    border: 1px solid #999;
}
.bar-gap {
    height: 3px;
    flex: none;
    background: #fff;
    border-top: 1px solid #777;
    margin-top: -3px;
}

/* headers */
.col-heads {
    height: 17px;
    flex: none;
    display: flex;
    padding-top: 3px;
    overflow: hidden;
    background: #f1f1f1;
    border-top: 1px solid #999;
}
.corner {
    width: 27px;
    flex: none;
    background: linear-gradient(135deg, #cecece 82%, #888 82%, #888 92%, #cecece 92%);
    border-right: 1px solid #aaa;
}
.col-heads span {
    width: 19px;
    flex: none;
    text-align: center;
    font: 11px/13px "Liberation Sans", sans-serif;
    letter-spacing: -0.3px;
    color: #333;
    background: #eee;
    border-right: 1px solid #bbb;
    border-bottom: 1px solid #aaa;
}
.col-heads span.sel {
    background: linear-gradient(#fbdfa6, #f8c873);
    border-color: #e8983e;
}
.work {
    height: 457px;
    flex: none;
    display: flex;
}
.row-heads {
    width: 27px;
    flex: none;
    background: #eee;
    border-right: 1px solid #aaa;
}
.row-heads span {
    display: block;
    height: 13px;
    text-align: center;
    font: 11px/13px "Liberation Sans", sans-serif;
    color: #333;
    border-bottom: 1px solid #c4c4c4;
}
.row-heads span.sel {
    background: linear-gradient(#fbdfa6, #f8c873);
    border-top: 1px solid #e8983e;
    border-bottom: 1px solid #e8983e;
    line-height: 11px;
}

/* sheet */
.sheet {
    flex: 1;
    padding: 26px 0 0 18px;
    background: #fff;
    color: #3a3a3a;
    font: 700 9.8px "DejaVu Sans", sans-serif;
}
.school, .board {
    width: 666px;
    height: 26px;
    text-align: center;
    white-space: nowrap;
}
.school {
    font: 600 23px/14px "Open Sans", sans-serif;
    color: #000;
}
.board {
    font: 700 14.6px/23px "Open Sans", sans-serif;
    color: #1f3c64;
    margin-bottom: 13px;
}
.info-row {
    height: 13px;
    margin-bottom: 13px;
    display: flex;
    line-height: 11px;
}
.info-label, .roll-label {
    font: 400 10px/12px "Liberation Sans", sans-serif;
    letter-spacing: -0.1px;
    color: #333;
    text-align: right;
    white-space: nowrap;
}
.info-label {
    width: 92px;
}
.info-value {
    width: 343px;
    margin-left: 3px;
    text-align: center;
    border-bottom: 1px solid #000;
}
.roll-label {
    width: 46px;
    margin-left: 26px;
}
.roll-cell {
    width: 98px;
    height: 16px;
    margin: -2px 0 0 2px;
    position: relative;
    line-height: 10px;
    text-align: center;
    border: 2px solid #000;
    border-top-width: 3px;
    border-bottom: 3px double #000;
}
.handle {
    position: absolute;
    right: -4px;
    bottom: -4px;
    width: 6px;
    height: 6px;
    background: #000;
    border: 1px solid #fff;
}
.marks-grid {
    display: grid;
    grid-template-columns: 134px repeat(5, 58px) 134px;
    column-gap: 18px;
    width: 666px;
    text-align: center;
    white-space: nowrap;
}
.marks-head {
    height: 13px;
    margin-top: 26px;
    line-height: 11px;
    font-size: 10.2px;
}
.marks-head span {
    border-bottom: 1px solid #000;
}
.marks-row {
    height: 26px;
    margin-bottom: 13px;
    font-size: 10px;
    line-height: 26px;
}
.fail {
    color: #f00;
}
.summary {
    width: 666px;
    height: 13px;
    line-height: 11px;
    text-align: center;
    white-space: nowrap;
}

/* scrollbars */
.vscroll {
    width: 19px;
    height: 471px;
    margin-top: -14px;
    flex: none;
    position: relative;
    display: flex;
    flex-direction: column;
    align-items: center;
    background: #474747;
}
.split-v {
    width: 16px;
    height: 8px;
    margin-top: 3px;
    background: linear-gradient(#fff, #ddd);
    border: 1px solid #999;
}
.arrow-up {
    margin: 8px 0 12px;
    width: 0;
    height: 0;
    border: 4px solid transparent;
    border-top: 0;
    border-bottom: 4px solid #bbb;
}
.vthumb {
    width: 19px;
    height: 390px;
    flex: none;
    display: flex;
    align-items: center;
    justify-content: center;
    background: linear-gradient(90deg, #f5f5f5, #dcdcdc);
}
.grip-h {
    width: 8px;
    height: 6px;
    border-top: 1px solid #888;
    border-bottom: 1px solid #888;
    background: linear-gradient(#888, #888) center / 100% 1px no-repeat;
}
.arrow-down {
    margin-top: 32px;
    width: 0;
    height: 0;
    border: 5px solid transparent;
    border-bottom: 0;
    border-top: 5px solid #bbb;
}
.sheet-tabs {
    height: 20px;
    flex: none;
    display: flex;
    align-items: stretch;
    background: linear-gradient(#5a5a5a, #757575);
    border-top: 2px solid #333;
}
.tab-nav {
    width: 78px;
    display: flex;
    align-items: center;
    justify-content: center;
    background: linear-gradient(#eee, #a8a8a8);
    border-right: 1px solid #666;
}
.sheet-tab {
    width: 49px;
    padding-left: 3px;
    text-align: center;
    font: 14px/19px "Open Sans", sans-serif;
    color: #333;
    background: linear-gradient(#d8d8d8, #a8acb0);
    border-right: 1px solid #777;
    border-radius: 2px 2px 0 0;
}
.sheet-tab.current {
    width: 98px;
    padding-left: 0;
    font-size: 14.5px;
    font-weight: 700;
    color: #222;
    background: #fff;
}
.new-tab {
    width: 38px;
    display: flex;
    align-items: center;
    justify-content: center;
    background: linear-gradient(#cfcfcf, #9c9c9c);
    clip-path: polygon(12px 0, 100% 0, 26px 100%, 0 100%);
}
.hscroll {
    flex: 1;
    padding-left: 340px;
    display: flex;
    align-items: stretch;
}
.split-h {
    width: 8px;
    flex: none;
    background: linear-gradient(90deg, #fff 3px, #999 3px, #999 4px, #fff 4px);
}
.arrow-left, .arrow-right {
    width: 0;
    height: 0;
    align-self: center;
    border: 6px solid transparent;
}
.arrow-left {
    margin: 0 9px 0 6px;
    border-left: 0;
    border-right: 7px solid #c4c4c4;
}
.hthumb {
    width: 326px;
    flex: none;
    display: flex;
    align-items: center;
    justify-content: center;
    background: linear-gradient(#f7f7f7, #d4d4d4);
}
.grip-v {
    width: 8px;
    height: 8px;
    background: repeating-linear-gradient(90deg, #888 0 1px, transparent 1px 3px);
}
.arrow-right {
    margin: 0 7px 0 22px;
    border-right: 0;
    border-left: 7px solid #c4c4c4;
}

/* status bar */
.statusbar {
    height: 26px;
    flex: none;
    display: flex;
    align-items: center;
    color: #e8ecf2;
    background: linear-gradient(#3f4452 0, #3a3e49 30%, #383838 35%, #2f2f2f 100%);
}
.ready {
    margin-left: 7px;
    font-size: 12.500px;
}
.status-sep {
    width: 1px;
    height: 20px;
    background: #111;
    margin-left: 8px;
}
.macro {
    margin: 0 0 0 10px;
}
.status-sep:nth-of-type(2) {
    margin-left: 13px;
}
.status-right {
    margin-left: auto;
    width: 297px;
    height: 100%;
    display: flex;
    align-items: center;
    padding-left: 6px;
    background: linear-gradient(#8a8f99, #3a3f4a);
    border-left: 1px solid #777;
}
.views {
    width: 70px;
    height: 23px;
    display: flex;
    background: linear-gradient(#cfd2d6, #a2a6ab);
    border: 1px solid #777;
    border-radius: 2px;
}
.view {
    width: 23px;
    display: flex;
    align-items: center;
    justify-content: center;
    border-right: 1px solid #8a8a8a;
}
.view:last-child {
    border-right: 0;
}
.view.on {
    background: linear-gradient(#fbdca0, #fdc56e);
}
.zoom-pct {
    width: 49px;
    padding-left: 8px;
    font-size: 12.500px;
}
.zoom-btn {
    width: 21px;
    height: 21px;
    flex: none;
    display: flex;
    align-items: center;
    justify-content: center;
    border-radius: 50%;
    font: 700 17px/1 "Liberation Sans", sans-serif;
    color: #6a7078;
    background: radial-gradient(#f8f8f8, #c2c6ca);
    border: 1px solid #666;
}
.zoom-track {
    width: 126px;
    height: 1px;
    position: relative;
    background: #111;
}
.zoom-tick {
    position: absolute;
    left: 62px;
    top: -4px;
    width: 1px;
    height: 9px;
    background: #111;
}
.zoom-thumb {
    position: absolute;
    left: 30px;
    top: -6px;
}

/* taskbar */
.taskbar {
    height: 51px;
    flex: none;
    position: relative;
    display: flex;
    align-items: center;
    background: #000;
}
.task {
    width: 62px;
    height: 100%;
    flex: none;
    display: flex;
    align-items: center;
    justify-content: center;
}
.task-start {
    width: 60px;
}
.task:nth-of-type(3) {
    margin-left: 3px;
}
.task-excel {
    width: 58px;
    background: #2e2e2e;
    margin-left: 2px;
}
.tray {
    margin-left: auto;
    margin-right: 31px;
    display: flex;
    align-items: center;
    color: #fff;
}
.tray-sound {
    margin-left: 11px;
}
.tray-lang {
    margin-left: 13px;
    font-size: 14px;
}
.clock {
    width: 84px;
    margin-left: 8px;
    display: flex;
    flex-direction: column;
    align-items: center;
    font-size: 14px;
    line-height: 22px;
}
.tray-note {
    margin-left: 15px;
}
.task-mark {
    position: absolute;
    bottom: 0;
    height: 2px;
    background: #fff7c4;
}
.mark-note {
    left: 191px;
    width: 51px;
}
.mark-excel {
    left: 620px;
    width: 58px;
}

/* watermark */
.activate {
    position: absolute;
    left: 777px;
    top: 604px;
    color: rgba(130, 130, 130, 0.5);
    white-space: nowrap;
}
.activate-title {
    font-size: 24px;
    line-height: 34px;
}
.activate-text {
    font-size: 17.4px;
    line-height: 25px;
}
```
